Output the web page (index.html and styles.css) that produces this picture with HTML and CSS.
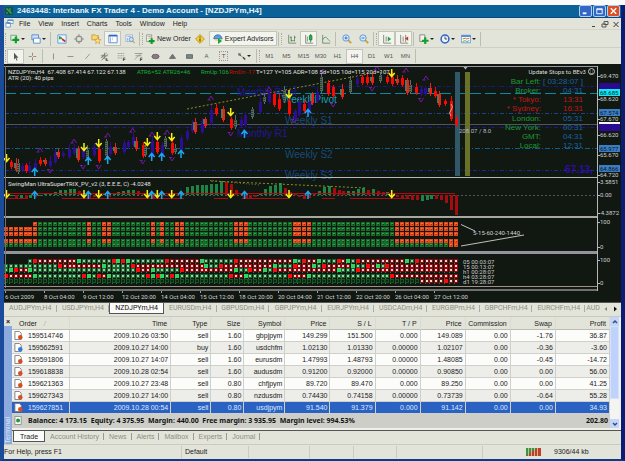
FILE: index.html
```html
<!DOCTYPE html>
<html lang="en">
<head>
<meta charset="utf-8">
<title>Interbank FX Trader 4</title>
<link rel="stylesheet" href="styles.css">
</head>
<body>
<main class="window">
  <header class="title">
    <svg class="app-icon" viewBox="0 0 8 8"><rect width="8" height="8" fill="#14523a"/><path d="M1 2h2v2h2v2h2M5 1v3M2 5v2" stroke="#4fae6c" fill="none"/></svg>
    <h1>2463448: Interbank FX Trader 4 - Demo Account - [NZDJPYm,H4]</h1>
    <button class="cap" aria-label="Minimize"><svg viewBox="0 0 12 11"><path d="M3 8h4" stroke="#fff" stroke-width="2"/></svg></button>
    <button class="cap" aria-label="Maximize"><svg viewBox="0 0 12 11"><path d="M3 3h6v5.500H3zM3 4h6" stroke="#fff" fill="none"/></svg></button>
    <button class="cap close" aria-label="Close"><svg viewBox="0 0 12 11"><path d="M3 2.500l6 6M9 2.500l-6 6" stroke="#fff" stroke-width="1.500"/></svg></button>
  </header>

  <nav class="menu">
    <svg class="menu-icon" viewBox="0 0 10 10"><path d="M3 1h6v4H3zM1 4h5v5H1z" fill="#fff" stroke="#6b9ad0"/><path d="M3 1.500h6M1 4.500h5" stroke="#3f74bd"/></svg>
    <button>File</button><button>View</button><button>Insert</button><button>Charts</button><button>Tools</button><button>Window</button><button>Help</button>
    <span class="mdi">
      <button aria-label="Minimize chart"><svg viewBox="0 0 8 8"><path d="M2 6.500h3" stroke="#444"/></svg></button>
      <button aria-label="Restore chart"><svg viewBox="0 0 8 8"><path d="M3 1.500h4v3H3zM1 4h4v3H1z" stroke="#555" fill="none"/></svg></button>
      <button aria-label="Close chart"><svg viewBox="0 0 8 8"><path d="M1.500 2l5 5M6.500 2l-5 5" stroke="#333"/></svg></button>
    </span>
  </nav>

  <div class="bar bar-main">
    <i class="grip"></i>
    <button class="drop" aria-label="New chart"><svg class="ico" viewBox="0 0 12 12"><path d="M1 1.500h7v6H1z" fill="#dff3df" stroke="#5a9b6a"/><path d="M7 3v8M3 7h8" stroke="#119a2a" stroke-width="2.600"/></svg><b></b></button>
    <button class="drop" aria-label="Profiles"><svg class="ico" viewBox="0 0 12 12"><path d="M1 1h8v6H1z" fill="#cfe3fa" stroke="#4a82c8"/><path d="M3 5h8v6H3z" fill="#fff" stroke="#4a82c8"/></svg><b></b></button>
    <i class="sep"></i>
    <button class="tool" aria-label="Market Watch"><svg class="ico" viewBox="0 0 12 12"><path d="M1 1h10v10H1z" fill="#eaf4ff" stroke="#5b94cf"/><path d="M3 3l3 2-3 1z" fill="#1a9a3a" stroke="#1a9a3a"/><path d="M6 6l4 3" stroke="#d02a2a" stroke-width="2"/></svg></button>
    <button class="tool" aria-label="Data Window"><svg class="ico" viewBox="0 0 12 12"><circle cx="6" cy="6" r="3.500" fill="none" stroke="#8a8c88" stroke-width="1.400"/><path d="M6 0v4M6 8v4M0 6h4M8 6h4" stroke="#8a8c88"/></svg></button>
    <button class="tool" aria-label="Navigator"><svg class="ico" viewBox="0 0 12 12"><path d="M1 1h4l1 1h3v5H1z" fill="#f7d873" stroke="#c79a35"/><path d="M8 4l1 2.500 3 .3-2.200 1.800.7 3L8 10l-2.500 1.600.7-3L4 6.800l3-.3z" fill="#fbe27d" stroke="#d08a2a" stroke-width=".7"/></svg></button>
    <button class="tool on" aria-label="Terminal"><svg class="ico" viewBox="0 0 12 12"><path d="M1 1.500h10v9H1z" fill="#fff" stroke="#4a7fd0"/><path d="M1 2h10" stroke="#2f67c4" stroke-width="2"/><path d="M3 4v6M5 5h1M5 7h1" stroke="#7fa7df"/></svg></button>
    <button class="tool" aria-label="Strategy Tester"><svg class="ico" viewBox="0 0 12 12"><path d="M1 1h8v8H1z" fill="#e9f0f8" stroke="#9ab3cf"/><path d="M3 3h4M3 5v3" stroke="#8fa9c6"/><circle cx="7.500" cy="6.500" r="2.500" fill="#cbe2f8" stroke="#5f8fc4"/><path d="M9.500 8.500l2 2.500" stroke="#d1a030" stroke-width="1.500"/></svg></button>
    <i class="sep"></i><i class="grip"></i>
    <button class="wide"><svg class="ico" viewBox="0 0 12 12"><path d="M2 1h6v8H2z" fill="#f6f6ee" stroke="#8a8a80"/><path d="M4 3h3M4 5h3" stroke="#999"/><path d="M8 5v7M4.500 8.500h7" stroke="#109a25" stroke-width="2.500"/></svg>New Order</button>
    <button class="tool" aria-label="MetaEditor"><svg class="ico" viewBox="0 0 12 12"><path d="M6 .7L11.300 6 6 11.300.7 6z" fill="#f5cf3e" stroke="#b98b13"/><path d="M6 3v1.500M6 5.500V9" stroke="#5a4200" stroke-width="1.300"/></svg></button>
    <button class="wide experts on"><svg class="ico" viewBox="0 0 12 12"><path d="M1 6q0-5 5-5 4 0 5 5z" fill="#5aa0df" stroke="#3877bd"/><path d="M1 6h10l-3 2H3z" fill="#f3d05c"/><path d="M6 5l5 3.500L6 12z" fill="#1ba637"/></svg>Expert Advisors</button>
    <i class="sep"></i><i class="grip"></i>
    <button class="tool" aria-label="Bar chart"><svg class="ico" viewBox="0 0 12 12"><path d="M2 1v10h9M9 9V2" stroke="#77796f" fill="none"/><path d="M5 3v6M5 4H3.500M5 8h2M9 4h1.500M9 8H7.500" stroke="#1d8d3a"/></svg></button>
    <button class="tool on" aria-label="Candlesticks"><svg class="ico" viewBox="0 0 12 12"><path d="M2 1v10h9M4 3v6" stroke="#77796f" fill="none"/><path d="M8 0v10" stroke="#167a2d"/><path d="M6.500 2h3v5h-3z" fill="#27b64a" stroke="#167a2d"/></svg></button>
    <button class="tool" aria-label="Line chart"><svg class="ico" viewBox="0 0 12 12"><path d="M2 1v10h9" stroke="#77796f" fill="none"/><path d="M2 7q3-6 6-1l3 3" stroke="#3aa35a" fill="none"/></svg></button>
    <i class="sep"></i>
    <button class="tool" aria-label="Zoom in"><svg class="ico" viewBox="0 0 12 12"><path d="M7 7l4 4" stroke="#cfa32d" stroke-width="2.400"/><circle cx="4.800" cy="4.800" r="3.800" fill="#d8ebfc" stroke="#4f8bd0"/><path d="M4.800 3v3.600M3 4.800h3.600" stroke="#1f5fb5"/></svg></button>
    <button class="tool" aria-label="Zoom out"><svg class="ico" viewBox="0 0 12 12"><path d="M7 7l4 4" stroke="#cfa32d" stroke-width="2.400"/><circle cx="4.800" cy="4.800" r="3.800" fill="#d8ebfc" stroke="#4f8bd0"/><path d="M3 4.800h3.600" stroke="#1f5fb5"/></svg></button>
    <i class="sep"></i><i class="grip"></i>
    <button class="tool on" aria-label="Auto scroll"><svg class="ico" viewBox="0 0 12 12"><path d="M2 1v10h9M5 3v6" stroke="#77796f" fill="none"/><path d="M7 3l4 3-4 3z" fill="#22a53c"/></svg></button>
    <button class="tool on" aria-label="Chart shift"><svg class="ico" viewBox="0 0 12 12"><path d="M2 1v10h9M5 3v6M8 1v9" stroke="#77796f" fill="none"/><path d="M11 3L7 5.500 11 8z" fill="#c43a2a"/></svg></button>
    <i class="sep"></i>
    <button class="drop" aria-label="Indicators"><svg class="ico" viewBox="0 0 12 12"><path d="M1 1h6v8H1z" fill="#f4f4ec" stroke="#7b7d74"/><path d="M7.500 4v8M3.500 8h8" stroke="#12a028" stroke-width="2.500"/></svg><b></b></button>
    <button class="drop" aria-label="Periods"><svg class="ico" viewBox="0 0 12 12"><circle cx="6" cy="6" r="4.700" fill="#eaf3ff" stroke="#2c63c0" stroke-width="1.800"/><path d="M6 3v3h2.500" stroke="#333" fill="none"/></svg><b></b></button>
    <button class="drop" aria-label="Templates"><svg class="ico" viewBox="0 0 12 12"><path d="M.5 1.500h11v9H.5z" fill="#fff" stroke="#5b94cf"/><path d="M.5 2.500h11" stroke="#4a86cc" stroke-width="2"/><path d="M2 6l3-1 2 1 3-1" stroke="#c04a2a" fill="none"/><path d="M2 9l3-1 2 1 3-1" stroke="#2a9a4a" fill="none"/></svg><b></b></button>
    <i class="sep"></i>
  </div>

  <div class="bar bar-line">
    <i class="grip"></i>
    <button class="tool on" aria-label="Cursor"><svg class="ico" viewBox="0 0 12 12"><path d="M4 1v9l2-2 1.500 3.500 1.200-.5L7.200 7.500H10z" fill="#555"/></svg></button>
    <button class="tool" aria-label="Crosshair"><svg class="ico" viewBox="0 0 12 12"><path d="M6 1v4M6 7v4M1 6h4M7 6h4" stroke="#8a6a55"/></svg></button>
    <i class="sep"></i>
    <button class="tool" aria-label="Vertical line"><svg class="ico" viewBox="0 0 12 12"><path d="M6 2v8" stroke="#94705c"/></svg></button>
    <button class="tool" aria-label="Horizontal line"><svg class="ico" viewBox="0 0 12 12"><path d="M2 6h8" stroke="#94705c"/></svg></button>
    <button class="tool" aria-label="Trendline"><svg class="ico" viewBox="0 0 12 12"><path d="M3 9.500l6-7" stroke="#94806c"/></svg></button>
    <button class="tool" aria-label="Equidistant channel"><svg class="ico" viewBox="0 0 12 12"><path d="M1 8l8-7M2 11l9-8M4 3v6M6 1v8M1 5h9" stroke="#77776d"/><path d="M8 8v3.500h3M8 9.500h2" stroke="#333" fill="none"/></svg></button>
    <button class="tool" aria-label="Fibonacci retracement"><svg class="ico" viewBox="0 0 12 12"><path d="M1 2h9M1 5h9M1 8h6" stroke="#88887d" stroke-dasharray="1.500 .7"/><path d="M8.500 12V8H11M8.500 10H11" stroke="#333" fill="none"/></svg></button>
    <button class="tool" aria-label="Fibonacci fan"><svg class="ico" viewBox="0 0 12 12"><path d="M1 2h10M2 5h8M1 10l8-8" stroke="#88887d"/><path d="M8.500 12V8H11M8.500 10H11" stroke="#333" fill="none"/></svg></button>
    <button class="tool" aria-label="Ellipse"><svg class="ico" viewBox="0 0 12 12"><ellipse cx="6" cy="6" rx="4.800" ry="3" fill="#8c7a82" stroke="#5b5b58"/></svg></button>
    <button class="tool" aria-label="Triangle"><svg class="ico" viewBox="0 0 12 12"><path d="M6 3l4 5.500H2z" fill="#77777c" stroke="#5b5b58"/></svg></button>
    <button class="tool" aria-label="Rectangle"><svg class="ico" viewBox="0 0 12 12"><path d="M2 3.500h8v5H2z" fill="#77868c" stroke="#5b5b58"/></svg></button>
    <button class="tool">A</button>
    <button class="tool"><span class="label-t">T</span></button>
    <button class="drop" aria-label="Arrows"><svg class="ico" viewBox="0 0 12 12"><path d="M2 2l3 3M8 7l3 3" stroke="#444" stroke-width="2"/><path d="M5 5l3 2M2 5l3-4" stroke="#888"/></svg><b></b></button>
    <i class="sep"></i><i class="grip"></i>
    <button class="tool">M1</button><button class="tool">M5</button><button class="tool">M15</button><button class="tool">M30</button><button class="tool">H1</button><button class="tool on">H4</button><button class="tool">D1</button><button class="tool">W1</button><button class="tool">MN</button>
    <i class="sep"></i>
  </div>

  <svg class="chart" id="chart" viewBox="4 64 617 238" role="img" aria-label="NZDJPYm H4 price chart"></svg>

  <nav class="chart-tabs">
    <a href="#">AUDJPYm,H4</a><a href="#">USDJPYm,H4</a><a href="#" class="active">NZDJPYm,H4</a><a href="#">EURUSDm,H4</a><a href="#">GBPUSDm,H4</a><a href="#">GBPJPYm,H4</a><a href="#">EURJPYm,H4</a><a href="#">USDCADm,H4</a><a href="#">EURGBPm,H4</a><a href="#">GBPCHFm,H4</a><a href="#">EURCHFm,H4</a><a href="#" class="cut">AUD</a>
    <button aria-label="Scroll left"><svg viewBox="0 0 8 8"><path d="M5 2L2.500 4 5 6z" fill="#888"/></svg></button>
    <button aria-label="Scroll right"><svg viewBox="0 0 8 8"><path d="M3 1.500L6 4 3 6.500z" fill="#111"/></svg></button>
  </nav>

  <section class="terminal">
    <div class="side"><button aria-label="Close terminal">×</button><span>Terminal</span></div>
    <div class="grid-wrap">
      <table>
        <colgroup><col class="c-order"><col class="c-time"><col class="c-type"><col class="c-size"><col class="c-sym"><col><col><col><col><col><col><col class="c-profit"></colgroup>
        <thead><tr><th>Order <em>/</em></th><th>Time</th><th>Type</th><th>Size</th><th>Symbol</th><th>Price</th><th>S / L</th><th>T / P</th><th>Price</th><th>Commission</th><th>Swap</th><th>Profit</th></tr></thead>
        <tbody id="orders"></tbody>
        <tfoot><tr><td colspan="11"><div class="cell"><svg class="doc" viewBox="0 0 10 10"><path d="M1 .5h7v9H1z" fill="#fff" stroke="#8a8a8a"/><circle cx="4.500" cy="5" r="2.200" fill="#1f9a3a"/></svg>Balance: 4 173.15&nbsp; Equity: 4 375.95&nbsp; Margin: 440.00&nbsp; Free margin: 3 935.95&nbsp; Margin level: 994.53%</div></td><td>202.80</td></tr></tfoot>
      </table>
      <div class="scroll">
        <button aria-label="Scroll up"><svg viewBox="0 0 8 8"><path d="M2 5l2-2 2 2" stroke="#35507d" stroke-width="1.500" fill="none"/></svg></button>
        <i class="thumb"></i>
        <button aria-label="Scroll down"><svg viewBox="0 0 8 8"><path d="M2 3l2 2 2-2" stroke="#35507d" stroke-width="1.500" fill="none"/></svg></button>
      </div>
    </div>
    <nav class="term-tabs">
      <a href="#" class="active">Trade</a><a href="#">Account History</a><a href="#">News</a><a href="#">Alerts</a><a href="#">Mailbox</a><a href="#">Experts</a><a href="#">Journal</a>
    </nav>
  </section>

  <footer class="status">
    <span>For Help, press F1</span><span class="profile">Default</span><span></span><span></span><span></span><span></span>
    <span class="net"><svg viewBox="0 0 15 8"><path d="M0 0h15v8H0z" fill="#b8422e"/><path d="M0 8V0h11z" fill="#3a9347"/><path d="M2.500 0v8M5.500 0v8M8.500 0v8M11.500 0v8" stroke="#e9dca8" stroke-width=".7"/></svg>9306/44 kb</span>
  </footer>
</main>
<script src="chart.js"></script>
</body>
</html>
```
FILE: styles.css
```css
* { box-sizing: border-box; }
body { margin: 0; padding-top: 5px; background: #fbfbfa; font: 7px/8px "Liberation Sans", Arial, sans-serif; color: #222; }
button { font: inherit; color: inherit; background: none; border: 0; padding: 0; margin: 0; display: flex; align-items: center; justify-content: center; }
a { color: inherit; text-decoration: none; }
svg { display: block; }

.window { border: solid #1b4c9c; border-width: 0 4px 2px; border-right-color: #0a1c74; border-bottom-color: #0b3c86; background: #e3e4d9; }

.title { display: flex; align-items: center; gap: 1px; height: 13px; padding-right: 1px; background: #0b6299; border-bottom: 1px solid #0a4680; color: #e9f3f6; }
.app-icon { width: 8px; height: 8px; margin: 0 3px 0 1px; }
.title h1 { flex: 1; margin: 0; font: bold 8px/12px "Liberation Sans", Arial, sans-serif; }
.cap { width: 13px; height: 12px; border: 1px solid #b4cdf0; border-radius: 2px; background: #3067c8; }
.cap.close { background: #dd4d22; }
.cap svg { width: 11px; height: 10px; }

.menu { display: flex; align-items: center; gap: 8px; height: 12px; padding-left: 1px; border-bottom: 1px solid #d5d6cb; }
.menu-icon { width: 9px; height: 9px; margin-right: -3px; }
.mdi { display: flex; gap: 3px; margin-left: auto; padding-right: 1px; }
.mdi svg { width: 8px; height: 8px; }

.bar { display: flex; align-items: center; padding-left: 1px; color: #555; }
.bar-main { height: 18px; border-bottom: 1px solid #cfd0c5; color: #222; }
.bar-line { height: 16px; font-size: 6px; }
.grip { width: 2px; height: 12px; border-left: 1px dotted #aaaaa0; }
.sep { width: 3px; height: 14px; margin-left: 1px; border-left: 1px solid #bcbdb2; }
.tool { width: 17px; height: 15px; }
.bar .on { background: #f3f4ee; border: 1px solid #c3c4ba; }
.ico { width: 10px; height: 10px; flex: none; }
.bar-line .ico { width: 9px; height: 9px; }
.drop { width: 21px; height: 15px; gap: 1px; }
.bar-line .drop { width: 23px; }
.drop b { border: solid transparent; border-width: 2px 2px 0; border-top-color: #222; }
.wide { height: 15px; gap: 2px; padding: 0 1px; white-space: nowrap; }
.experts { padding: 0 3px; }
.label-t { border: 1px dotted #999; padding: 0 2px; }

.chart { width: 100%; height: auto; background: #111812; font-family: "Liberation Sans", Arial, sans-serif; }
.s6 { font-family: Roboto, "Liberation Sans", sans-serif; font-size: 6px; }
.s8 { font-size: 8px; }
.s10 { font-size: 10px; }
.big { font-size: 10px; font-weight: bold; }
.end { text-anchor: end; }

.chart-tabs { display: flex; height: 14px; padding: 0 2px 2px 0; border-top: 1px solid #555; color: #8d8d83; font-family: Roboto, "Liberation Sans", sans-serif; }
.chart-tabs a { flex: 1 1 0; min-width: 0; text-align: center; line-height: 11px; background: linear-gradient(#aaa, #aaa) right center / 1px 7px no-repeat; }
.chart-tabs a.active { color: #111; background: #fbfbfa; border: solid #555; border-width: 0 1px 1px; }
.chart-tabs a.cut { flex: 0 0 16px; background: none; }
.chart-tabs button svg { width: 8px; height: 8px; }
.chart-tabs button { width: 9px; }

.terminal { display: grid; grid-template-columns: 8px 1fr; border-top: 1px solid #c9c9be; border-bottom: 1px solid #cacbbf; }
.side { grid-row: 1 / 3; display: flex; flex-direction: column; justify-content: space-between; background: #8caade; color: #dfe8fb; }
.side button { height: 9px; background: #e3e4d9; color: #111; font-weight: bold; }
.side span { writing-mode: vertical-rl; transform: rotate(180deg); line-height: 8px; padding-top: 1px; }
.grid-wrap { display: flex; border-bottom: 1px solid #555; padding: 0 2px 2px 0; background: #eff0ea; }
table { flex: 1; width: 100%; table-layout: fixed; border-collapse: separate; border-spacing: 0; }
.c-order { width: 58px; }
.c-time { width: 101px; }
.c-type { width: 40px; }
.c-size { width: 33px; }
.c-sym { width: 41px; }
col { width: 45px; }
.c-profit { width: 54px; }
th, td { height: 12px; padding: 0 2px 0 1px; line-height: 11px; text-align: right; font-weight: normal; white-space: nowrap; border: solid #d0d0ca; border-width: 0 1px 1px 0; }
th { height: 13px; padding-right: 3px; background: #e3e4d9; border-right-color: #dadbd0; border-bottom-color: #bdbdb2; }
th:first-child { text-align: left; padding-left: 7px; }
th em { color: #aaa; margin-left: 5px; }
tbody tr { background: #fcfcfa; }
tbody tr:nth-child(even) { background: #edede9; }
tbody tr.sel { background: #2a62c4; color: #dfeaff; }
.cell { display: flex; align-items: center; gap: 5px; height: 11px; }
.doc { width: 9px; height: 9px; margin-left: 1px; }
tfoot td { height: 14px; background: #cdcec8; border-right: 0; font: bold 7px/12px "Noto Sans", "Liberation Sans", sans-serif; color: #111; }
.scroll { display: flex; flex-direction: column; width: 9px; background: #f4f5f3; }
.scroll button { height: 9px; background: #c3d5fa; }
.scroll svg { width: 8px; height: 8px; }
.thumb { flex: 1; margin-bottom: 20px; background: #bfd2fb; border: 1px solid #d6e2fc; }

.term-tabs { display: flex; height: 13px; padding-bottom: 2px; padding-left: 1px; color: #8d8d83; }
.term-tabs a { padding: 0 5px; line-height: 11px; background: linear-gradient(#999, #999) right center / 1px 7px no-repeat; }
.term-tabs a.active { padding: 0 6px; color: #222; background: #fbfbfa; border: solid #555; border-width: 0 1px 1px; }

.status { display: grid; grid-template-columns: 178fr 67fr 61fr 44fr 43fr 86fr 138fr; height: 14px; align-items: center; line-height: 12px; }
.status span { height: 12px; min-width: 0; border-right: 1px solid #cbccc1; white-space: nowrap; }
.status .profile { padding-left: 3px; }
.status .net { display: flex; align-items: center; gap: 13px; padding-left: 43px; border: 0; }
.net svg { width: 15px; height: 8px; }
```
FILE: chart.js
```js
const out = [];
const rect = (x, y, w, h, fill) => out.push(`<rect x="${x}" y="${y}" width="${w}" height="${h}" fill="${fill}" shape-rendering="crispEdges"/>`);
const line = (x1, y1, x2, y2, color, dash = "", w = 1) => out.push(`<line x1="${x1}" y1="${y1}" x2="${x2}" y2="${y2}" stroke="${color}" stroke-width="${w}" stroke-dasharray="${dash}"/>`);
const text = (x, y, s, color, cls = "s6") => out.push(`<text x="${x}" y="${y}" fill="${color}" class="${cls}">${s}</text>`);
const path = (d, color, w = 1) => out.push(`<path d="${d}" fill="none" stroke="${color}" stroke-width="${w}"/>`);
const barX = k => 6 + 4.89 * k;

// Pivot levels
line(5, 86.5, 597, 86.5, "#181890", "4 2 1 2");
line(5, 93.5, 597, 93.5, "#0888a4", "11 4");
line(5, 113.5, 597, 113.5, "#1a4284", "4 2 1 2");
line(5, 124.5, 597, 124.5, "#555");
line(5, 127.5, 597, 127.5, "#181890", "4 2 1 2");
line(5, 148.5, 597, 148.5, "#0e6090", "5 2 1 2");
line(5, 170.5, 597, 170.5, "#162c9c", "4 2 1 2");

text(237, 96, "Monthly Pivot", "#221694", "s10");
text(282, 102.5, "WeeklyPivot", "#18a0ba", "s10");
text(285, 123.5, "Weekly S1", "#1a4a78", "s10");
text(237, 137, "Monthly R1", "#24169c", "s10");
text(285, 158, "Weekly S2", "#1a4a78", "s10");
text(285, 178.5, "Weekly S3", "#1a4a78", "s10");
line(187, 109, 368, 74, "#8c8c28", "2 2");

// Session bands
rect(455, 72, 5, 104, "#305868");
rect(465, 72, 5, 104, "#68702a");
out.push('<path d="M463 66.500h5l-2.500 3z" fill="#a8b4bc"/>');

// Candles: x, top, bottom, type (b up, r down, g neutral, m mixed)
const candles = `10.7 162 167 r,15.7 163 170 m,18 163 172 g,22 166 170 b,25.700 165 171 r,29 166 171 b,34.700 163 169 b,40 160 164 r,45 160 164 m,50 161 166 b,55 153 162 b,58 152 157 m,63 153 156 b,69 149 157 b,74 148 153 b,78 149 160 m,83 149 157 b,87 150 158 g,94 147 155 b,98.700 149 161 r,105.500 141 156 g,110 147 154 b,115 147 153 m,123.500 143 152 b,128 142 147 b,132.700 137 145 b,136 141 149 m,142.700 145 156 r,145 147 155 g,152 141 157 b,157 142 152 r,162 145 155 b,164.500 138 147 g,171.700 143 153 r,175 148 152 g,181 138 151 b,186.700 131 139 b,191.700 125 131 b,195 122 132 m,201.500 121 132 b,205 119 126 m,211 110 123 b,216 108 114 r,223 109 120 m,230.700 119 128 r,235 120 127 g,240.700 120 126 b,245 115 125 b,252 109 117 g,260 102 112 b,264 97 102 g,269 93 102 b,274 94 105 r,279 99 109 r,284 90 101 g,289 101 114 r,295 111 119 b,299 102 115 b,304 104 111 r,309 102 113 b,312 94 103 m,317 92 101 b,321 77 91 g,328 83 94 r,333 87 96 r,342 89 97 m,350 80 92 g,357 79 84 b,362 77 83 r,367 77 83 r,372 77 83 m,380 75 81 g,387 77 82 r,392 77 84 r,397 79 83 m,402 78 85 r,406.700 80 93 m,410 85 92 g,416 87 93 r,421 89 94 b,425 88 94 b,430 88 94 m,435 91 96 r,438.500 94 105 m,445 101 104 r,450.500 101 119 r,455.700 119 125 r`;
candles.split(",").forEach((c, i) => {
  const [x, t, b, type] = c.split(" ");
  const top = Math.round(t), bottom = Math.round(b), cx = Math.round(x);
  const color = { b: "#2c0e94", r: "#fa0804", g: "#4e6c62", m: "#f02010" }[type];
  const reach = 2 + (i * 7) % 4;
  rect(cx, top - reach, 1, bottom - top + reach + 2, type === "g" ? "#5a7068" : color);
  rect(cx - 1, top, 3, bottom - top, color);
  if (type === "m") rect(cx - 2, top, 2, bottom - top - 2, "#5d7258");
  if (type === "g") for (let y = top; y < bottom; y += 2) rect(cx - 1, y, 2, 1, "#343c2c");
});
path("M451 104q3 3 0 6q-3 3 0 6", "#b4b4a8");

// Fractals
[[40,150],[74,141],[107.700,135],[132.700,130],[152,134],[167,132],[211,98],[269,89],[323,71],[377,68],[406,70],[426,78]].forEach(([x, y]) => path(`M${x - 2.500} ${y + 2}l2.500-4l2.500 4M${x - 3.500} ${y + 2}h3`, "#7416a6"));
[[50,171],[83,167],[98.700,167],[142.700,162],[172,159],[230.700,134],[294,121],[333,105],[372,89],[421,100]].forEach(([x, y]) => path(`M${x - 2.500} ${y - 2}l2.500 4l2.500-4M${x - 3} ${y - 1.500}h3`, "#7416a6"));

// Signal arrows, repeated in the oscillator pane
const down = (x, y) => path(`M${x} ${y - 4}v7M${x - 3} ${y}l3 3.500l3-3.500`, "#f8f010", 1.5);
const up = (x, y) => path(`M${x} ${y + 4}v-7M${x - 3} ${y}l3-3.500l3 3.500`, "#18aaf0", 1.5);
const sells = [[6.500,158],[84,147],[98.700,143],[147.300,142],[157.300,136],[171.700,137],[230.700,112],[289,94],[391.700,73]];
const buys = [[34.700,172],[88.300,161],[107.700,160],[151.700,157],[161.700,157],[181,154],[244.500,134],[308,113]];
sells.forEach(([x, y]) => down(x, y));
buys.forEach(([x, y]) => up(x, y));

text(8, 74, "NZDJPYm,H4&#160; 67.408 67.414 67.122 67.138", "#e0e0e0");
text(8, 80, "ATR (20): 40 pips", "#e0e0e0");
text(137, 74, "ATR6=52 ATR26=46", "#16b03c");
text(201, 74, "RmUp:106", "#16b03c");
text(229, 74, "RmDn -17", "#c01010");
text(256, 74, "T=127 Y=105 ADR=108 5d=105 10d=115 20d=107", "#e0e0e0");
text(459, 133, "208.07 / 8.0", "#b8b8cc");
text(586, 74, "Update Stops to BEv3", "#dcdcdc", "s6 end");
out.push('<circle cx="591.500" cy="71.500" r="3" fill="none" stroke="#c8c8c8"/><path d="M590 71h.8M592.300 71h.8M590 73q1.500 1 3 0" fill="none" stroke="#c8c8c8" stroke-width=".7"/>');

[["Bar Left:", "[ 03:28:07 ]", 0], ["Broker:", "04:31", 0], ["* Tokyo:", "13:31", 1], ["* Sydney:", "16:31", 1], ["London:", "05:31", 0], ["New York:", "00:31", 0], ["GMT:", "04:31", 0], ["Local:", "12:31", 0]].forEach(([name, time, hot], i) => {
  const y = 84 + Math.round(i * 9.15);
  text(541, y, name, hot ? "#c41414" : "#1e9a34", "s8 end");
  text(583, y, time, hot ? "#c41414" : "#1862a4", "s8 end");
});
text(565, 173, "67.13,", "#2e0ca8", "big");

// Oscillator pane
rect(4, 177, 594, 1, "#b8b8b8");
line(5, 195.500, 597, 195.500, "#555", "2 2");
const osc = [0,-1,-3,-3,-3,-3,-2,-1,1,2,3,5,5,6,6,4,-1,-3,-2,-1,1,-2,2,3,4,5,5,4,1,-2,-3,-2,-1,-1,-1,-1,2,8,9,10,10,10,11,11,14,13,11,5,1,-3,-4,-2,2,6,9,10,12,7,3,1,-2,-4,-3,1,4,8,9,7,5,4,4,4,6,7,5,6,4,3,3,1,-2,-3,-4,-5,-5,-6,-5,-4,-4,-5,-8,-15,-20];
osc.forEach((h, k) => {
  const rising = k > 0 && Math.abs(h) >= Math.abs(osc[k - 1]) && h > 0 || (k > 84 && k < 88) || (k < 8 && k % 2);
  const x = Math.round(barX(k)) - 1;
  rect(x, h > 0 ? 195 - h : 195, 3, Math.abs(h) || 1, rising ? "#1e8446" : "#a40c10");
});
path("M5 193.500H455M5 198.500H28M62 198.500H184M214 198.500H228M242 198.500H288M322 198.500H335M350 198.500H410", "#a80c14");
line(211, 181, 366, 188, "#8c8c28", "2 2");
line(210, 180.500, 260, 185, "#6c7c38", "1 2");
sells.forEach(([x]) => down(x, 194));
buys.forEach(([x]) => up(x, 195));
text(8, 186, "SwingMan UltraSuperTRIX_PV_v2 (3, E.E.E, C) -4.0248", "#e0e0e0");

// Trend matrix
rect(4, 216, 594, 2, "#a8a8a0");
const hot = k => k < 7 || [17,20,21,30,32,35,36,47,48,49,59,60,61,62].includes(k) || k > 79;
[222, 227, 232, 239, 243].forEach((y, row) => {
  for (let k = 0; k < 93; k++) {
    if (row === 0 && k < 6) continue;
    const orange = row < 4 ? hot(k) : k > 90;
    const x = Math.round(barX(k)) - 2;
    rect(x, y, 4, 4, orange ? "#e24a1c" : "#166c28");
    rect(x + 1, y + 1, 2, 1, orange ? "#f87038" : "#34a050");
    rect(x + 2, y + 2, 1, 1, orange ? "#a82810" : "#0c3c18");
  }
});
path("M461 224.500l14 6.500M461 246l63-11", "#c0c0bc");
text(473, 235, "5-15-60-240-1440", "#d0d0d0");

// Multi-timeframe matrix: runs start at a bar; upper case marks a fresh signal
rect(4, 251, 594, 3, "#94949c");
const runs = [
  "5g 6R 7r 15G 16g 22R 23G 24R 25G 26g 33R 34r 40G 41g 47R 48r 59G 60g 61R 62r 64G 65g 68R 69r 70G 71g 72R 73r 82G 83g 84R 85r",
  "0g 11R 12r 20G 21g 26R 27r 41G 42g 44R 45r 55G 56g 59R 60r 63G 64g 65R 66r 71G 72g 74R 75r 76G 77g 78R 79r",
  "0g 1G 2R 3r 5G 6g 27R 28r 30G 31g 36R 37r 47G 48g 50R 51r 53G 54g 55R 56r 68G 69g 72R 73r",
  "0R 1r 6G 7g 16R 17G 18g 19R 20r 21G 22g 29R 30G 31R 32G 33g 34R 35G 36g 46R 47r 49G 50g 58R 59r 62G 63g 79R 80r",
  "0d 85r 90R 91r"
];
[259, 264, 268, 274, 279].forEach((y, row) => {
  const marks = Object.fromEntries(runs[row].split(" ").map(m => [parseInt(m), m.slice(-1)]));
  let state = "";
  for (let k = 0; k < 93; k++) {
    state = marks[k] || state;
    if (!state) continue;
    const x = Math.round(barX(k)) - 2;
    rect(x, y, 4, 4, { r: "#96080e", R: "#ff0a0a", g: "#17672c", G: "#2fd45c", d: "#145424" }[state]);
    if (state === "r" || state === "g") rect(x + 1, y + 1, 2, 2, state === "r" ? "#e8d8d4" : "#a8c8ac");
    if (state === "d") rect(x + 1, y + 1, 2, 2, "#0c2812");
    if (row !== 1 || k % 2) rect(x, y + 4, 1, 1, "#2c7a3c");
  }
});
["05 00:03:07", "15 00:13:07", "h1 00:28:07", "h4 03:28:07", "d1 19:28:07"].forEach((s, i) => text(463, 264 + i * 5, s, "#c8c8c8"));

// Frame and time axis
rect(4, 66, 594, 1, "#9c94a4");
rect(5, 66, 1, 222, "#70707c");
rect(4, 286, 594, 1, "#a09088");
rect(4, 289, 594, 2, "#707070");
rect(597, 66, 1, 225, "#b8b8b8");
["6 Oct 2009", "8 Oct 04:00", "9 Oct 12:00", "12 Oct 20:00", "14 Oct 04:00", "15 Oct 12:00", "18 Oct 20:00", "20 Oct 04:00", "21 Oct 12:00", "22 Oct 20:00", "26 Oct 04:00", "27 Oct 12:00"].forEach((s, i) => {
  const x = 5 + i * 39;
  rect(x, 291, 1, 2, "#a0a0a0");
  text(x, 299, s, "#d4d4d4");
});

// Price scale
rect(599, 83, 21, 6, "#2a0a90");
rect(599, 122, 21, 3, "#f4f4f4");
rect(599, 124, 21, 7, "#2a0a90");
[["68.685", 89, "#10e8f4"], ["67.574", 109, "#3c7cc0"], ["65.977", 145, "#3c7cc0"], ["64.866", 165, "#3c7cc0"]].forEach(([s, y, fill]) => {
  rect(599, y, 21, 7, fill);
  text(600, y + 6, s, "#08182c");
});
[["69.470",76],["68.620",99],["67.670",119],["66.620",135],["65.670",155],["64.720",175],["3.5851",182],["0.00",195],["-4.3872",213],["100",222],["0",247],["100",260],["0",283]].forEach(([s, y]) => {
  rect(598, y, 2, 1, "#b8b8b8");
  text(s[0] === "-" ? 599 : 600, y + 2, s, "#d0d0d0");
});
document.getElementById("chart").innerHTML = out.join("");

const orders = [
  ["159514746", "2009.10.26 03:50", "sell", "1.60", "gbpjpym", "149.299", "151.500", "0.000", "149.089", "0.00", "-1.76", "36.87"],
  ["159562591", "2009.10.27 14:00", "buy", "1.60", "usdchfm", "1.02130", "1.01330", "0.00000", "1.02107", "0.00", "-0.36", "-3.60"],
  ["159591806", "2009.10.27 14:07", "sell", "1.60", "eurusdm", "1.47993", "1.48793", "0.00000", "1.48085", "0.00", "-0.45", "-14.72"],
  ["159618838", "2009.10.28 02:54", "sell", "1.60", "audusdm", "0.91200", "0.92000", "0.00000", "0.90850", "0.00", "0.00", "56.00"],
  ["159621363", "2009.10.27 23:48", "sell", "0.80", "chfjpym", "89.720", "89.470", "0.000", "89.250", "0.00", "0.00", "41.25"],
  ["159627343", "2009.10.27 14:00", "sell", "0.80", "nzdusdm", "0.74430", "0.74158", "0.00000", "0.73739", "0.00", "-0.64", "55.28"],
  ["159627851", "2009.10.28 00:54", "sell", "0.80", "usdjpym", "91.540", "91.379", "0.000", "91.142", "0.00", "0.00", "34.93"]
];
document.getElementById("orders").innerHTML = orders.map((o, i) => {
  const dot = o[2] === "buy" ? "#2f7ae0" : "#dc4a1e";
  const icon = `<svg class="doc" viewBox="0 0 10 10"><path d="M1 .5h5l2 2v7H1z" fill="#fff" stroke="#777"/><circle cx="7" cy="7" r="2.500" fill="${dot}"/></svg>`;
  return `<tr class="${i === 6 ? "sel" : ""}"><td><div class="cell">${icon}${o[0]}</div></td>${o.slice(1).map(v => `<td>${v}</td>`).join("")}</tr>`;
}).join("");
```
